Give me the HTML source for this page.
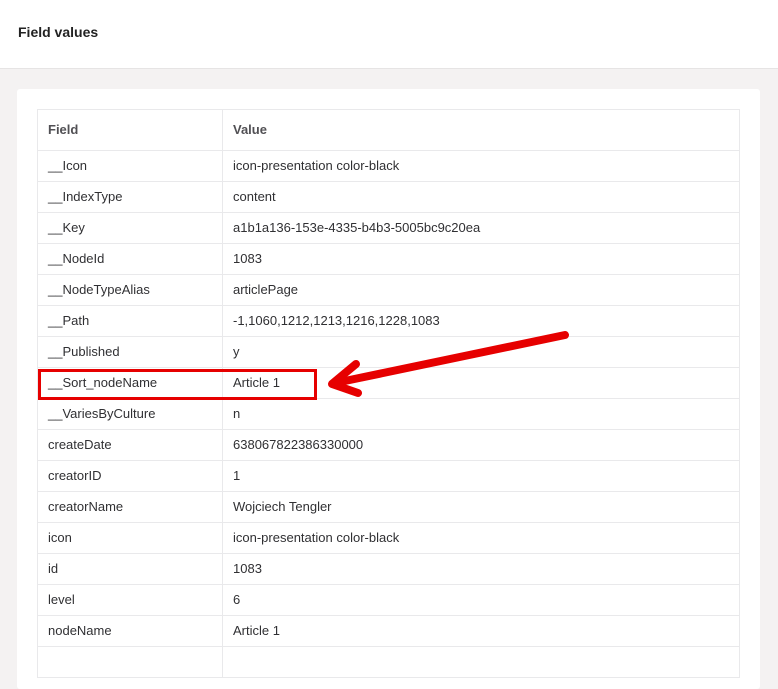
<!DOCTYPE html>
<html><head><style>
body{margin:0;width:778px;height:649px;overflow:hidden;background:#f4f2f2;font-family:"Liberation Sans",sans-serif;position:relative}
.hdr{position:absolute;left:0;top:0;width:778px;height:68px;background:#fff;border-bottom:1px solid #e6e4e4}
.hdr h1{position:absolute;left:18px;top:24px;margin:0;font-size:14px;font-weight:bold;color:#222}
.card{position:absolute;left:17px;top:89px;width:743px;height:600px;background:#fff;border-radius:3px}
table{position:absolute;left:20px;top:20px;width:703px;border-collapse:collapse;font-size:13px;color:#303033}
td,th{border:1px solid #e9e9eb;height:30px;padding:0 10px;text-align:left;line-height:30px;vertical-align:top}
th{height:40px;line-height:40px;font-weight:bold;color:#515054}
td:first-child,th:first-child{width:164px}
</style></head><body>
<div class="hdr"><h1>Field values</h1></div>
<div class="card"><table>
<tr><th>Field</th><th>Value</th></tr>
<tr><td>__Icon</td><td>icon-presentation color-black</td></tr>
<tr><td>__IndexType</td><td>content</td></tr>
<tr><td>__Key</td><td>a1b1a136-153e-4335-b4b3-5005bc9c20ea</td></tr>
<tr><td>__NodeId</td><td>1083</td></tr>
<tr><td>__NodeTypeAlias</td><td>articlePage</td></tr>
<tr><td>__Path</td><td>-1,1060,1212,1213,1216,1228,1083</td></tr>
<tr><td>__Published</td><td>y</td></tr>
<tr><td>__Sort_nodeName</td><td>Article 1</td></tr>
<tr><td>__VariesByCulture</td><td>n</td></tr>
<tr><td>createDate</td><td>638067822386330000</td></tr>
<tr><td>creatorID</td><td>1</td></tr>
<tr><td>creatorName</td><td>Wojciech Tengler</td></tr>
<tr><td>icon</td><td>icon-presentation color-black</td></tr>
<tr><td>id</td><td>1083</td></tr>
<tr><td>level</td><td>6</td></tr>
<tr><td>nodeName</td><td>Article 1</td></tr>
<tr><td>&nbsp;</td><td></td></tr>
</table></div>
<div style="position:absolute;left:38px;top:369px;width:273px;height:25px;border:3px solid #e60000"></div>
<svg style="position:absolute;left:0;top:0" width="778" height="649">
<line x1="565" y1="335" x2="340" y2="382" stroke="#e60000" stroke-width="8" stroke-linecap="round"/>
<polyline points="356,364 332,384 358,393" fill="none" stroke="#e60000" stroke-width="8" stroke-linecap="round" stroke-linejoin="round"/>
</svg>
</body></html>
